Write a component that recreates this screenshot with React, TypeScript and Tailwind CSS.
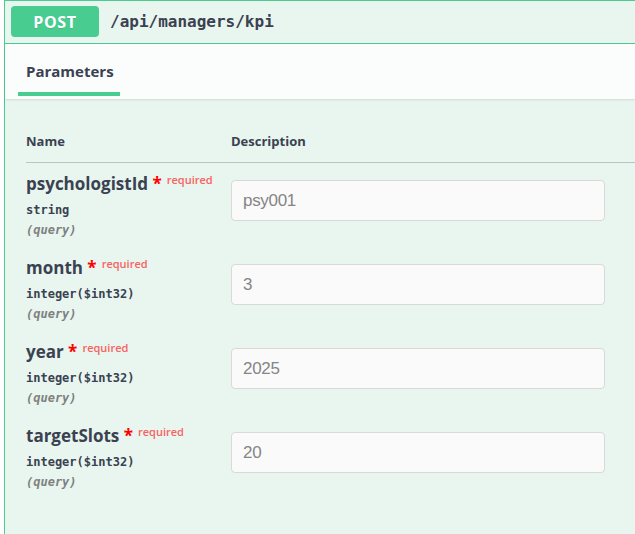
import React from "react";

type Param = { name: string; type: string; value: string };

const params: Param[] = [
  { name: "psychologistId", type: "string", value: "psy001" },
  { name: "month", type: "integer($int32)", value: "3" },
  { name: "year", type: "integer($int32)", value: "2025" },
  { name: "targetSlots", type: "integer($int32)", value: "20" },
];

function Row({ p }: { p: Param }) {
  return (
    <div className="flex">
      <div className="w-[205px] shrink-0 pt-[10px] pb-[7px]">
        <div className="h-[22px] leading-[22px] whitespace-nowrap text-[#3b4151]">
          <span className="text-[17px] font-bold">{p.name}</span>
          <span className="text-[17px] font-bold text-[#ff0000]">{"\u00a0*"}</span>
          <span className="relative -top-[6px] pl-[5px] text-[11px] font-semibold text-[#f9625f]">
            required
          </span>
        </div>
        <div className="mt-[5px] h-[20px] leading-[20px] font-['DejaVu_Sans_Mono',monospace] text-[12px] font-semibold text-[#3b4151]">
          {p.type}
        </div>
        <div className="h-[20px] leading-[20px] font-['DejaVu_Sans_Mono',monospace] text-[12px] font-semibold italic text-[#808080]">
          (query)
        </div>
      </div>
      <div className="pt-[17px]">
        <input
          readOnly
          placeholder={p.value}
          className="block w-[374px] h-[41px] rounded-[4px] border border-[#d9d9d9] bg-[#fafafa] pl-[11px] font-['Liberation_Sans',Arial,sans-serif] text-[17px] tracking-[-0.3px] text-[#3b4151] placeholder:text-[#858585] outline-none"
        />
      </div>
    </div>
  );
}

export default function App() {
  return (
    <div className="w-[635px] h-[534px] overflow-hidden bg-white font-['Open_Sans',sans-serif]">
      <div className="ml-[4px] w-[700px] min-h-[560px] border-t border-l border-[#49cc90] bg-[#e8f6ef]">
        {/* summary */}
        <div className="flex items-start h-[43px] border-b border-[#49cc90] pl-[6px] pt-[5px]">
          <div className="flex w-[88px] h-[31px] items-center justify-center rounded-[4px] bg-[#49cc90] text-[16px] font-bold tracking-[0.6px] text-white [text-shadow:0_1px_0_rgba(0,0,0,0.1)]">
            POST
          </div>
          <div className="ml-[11px] h-[31px] flex items-center font-['DejaVu_Sans_Mono',monospace] text-[16px] font-bold text-[#3b4151]">
            /api/managers/kpi
          </div>
        </div>

        {/* tab header */}
        <div className="bg-white/80 shadow-[0_1px_2px_rgba(0,0,0,0.1)] pt-[17px] pb-[3px]">
          <div className="pl-[21px] h-[20px] leading-[20px] text-[15px] font-bold text-[#3b4151]">
            Parameters
          </div>
          <div className="ml-[13px] mt-[11px] w-[102px] h-[4px] bg-[#49cc90]" />
        </div>

        {/* table */}
        <div className="pl-[21px] pt-[32px]">
          <div className="flex h-[32px] border-b border-[#b9c5c2] pb-[11px] text-[13px] font-bold leading-[20px] text-[#3b4151]">
            <div className="w-[205px] shrink-0">Name</div>
            <div>Description</div>
          </div>
          {params.map((p) => (
            <Row key={p.name} p={p} />
          ))}
        </div>
      </div>
    </div>
  );
}
